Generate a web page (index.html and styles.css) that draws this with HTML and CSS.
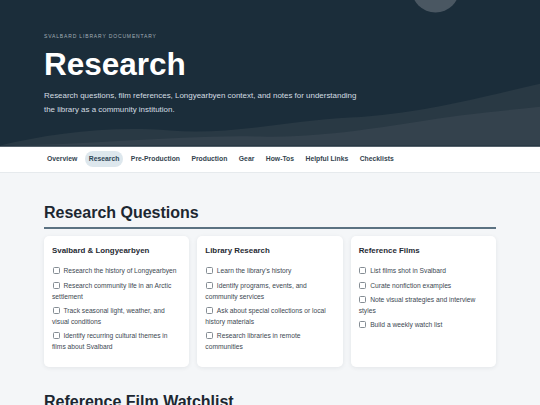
FILE: index.html
```html
<!DOCTYPE html>
<html lang="en">
<head>
<meta charset="utf-8">
<title>Research</title>
<link rel="stylesheet" href="styles.css">
</head>
<body>
<header class="hero">
  <svg class="hero-art" viewBox="0 0 540 146" preserveAspectRatio="none" aria-hidden="true">
    <circle cx="435.5" cy="-11.5" r="24" fill="#4a5762"/>
    <path d="M0,146 C50,134 110,126 170,131 C230,136 290,121 350,118 C420,114 470,100 540,84 L540,146 Z" fill="#293944"/>
    <path d="M0,146 C90,146 180,135 260,137 C330,139 400,124 460,116 C490,112 515,110 540,107 L540,146 Z" fill="#34424d"/>
  </svg>
  <div class="hero-inner">
    <p class="eyebrow">SVALBARD LIBRARY DOCUMENTARY</p>
    <h1 class="hero-title">Research</h1>
    <p class="hero-sub">Research questions, film references, Longyearbyen context, and notes for understanding the library as a community institution.</p>
  </div>
</header>
<nav class="nav">
  <a class="nav-item" href="#">Overview</a>
  <a class="nav-item active" href="#">Research</a>
  <a class="nav-item" href="#">Pre-Production</a>
  <a class="nav-item" href="#">Production</a>
  <a class="nav-item" href="#">Gear</a>
  <a class="nav-item" href="#">How-Tos</a>
  <a class="nav-item" href="#">Helpful Links</a>
  <a class="nav-item" href="#">Checklists</a>
</nav>
<main class="main">
  <section class="section">
    <h2 class="section-title">Research Questions</h2>
    <div class="cards">
      <div class="card">
        <h3 class="card-title">Svalbard &amp; Longyearbyen</h3>
        <ul class="checklist">
          <li><input type="checkbox" class="box">Research the history of Longyearbyen</li>
          <li><input type="checkbox" class="box">Research community life in an Arctic settlement</li>
          <li><input type="checkbox" class="box">Track seasonal light, weather, and visual conditions</li>
          <li><input type="checkbox" class="box">Identify recurring cultural themes in films about Svalbard</li>
        </ul>
      </div>
      <div class="card">
        <h3 class="card-title">Library Research</h3>
        <ul class="checklist">
          <li><input type="checkbox" class="box">Learn the library's history</li>
          <li><input type="checkbox" class="box">Identify programs, events, and community services</li>
          <li><input type="checkbox" class="box">Ask about special collections or local history materials</li>
          <li><input type="checkbox" class="box">Research libraries in remote communities</li>
        </ul>
      </div>
      <div class="card">
        <h3 class="card-title">Reference Films</h3>
        <ul class="checklist">
          <li><input type="checkbox" class="box">List films shot in Svalbard</li>
          <li><input type="checkbox" class="box">Curate nonfiction examples</li>
          <li><input type="checkbox" class="box">Note visual strategies and interview styles</li>
          <li><input type="checkbox" class="box">Build a weekly watch list</li>
        </ul>
      </div>
    </div>
  </section>
  <section class="section">
    <h2 class="section-title">Reference Film Watchlist</h2>
  </section>
</main>
</body>
</html>
```

FILE: styles.css
```css
* { box-sizing: border-box; }
html, body {
  margin: 0;
  padding: 0;
  background: #f4f6f8;
  font-family: "Liberation Sans", Arial, sans-serif;
}
.hero {
  position: relative;
  background: #1b2d3a;
  border-bottom: 1px solid #55616b;
  overflow: hidden;
}
.hero-art {
  position: absolute;
  left: 0;
  top: 0;
  width: 100%;
  height: 100%;
  display: block;
}
.hero-inner {
  position: relative;
  padding: 32.5px 44px 29px;
}
.eyebrow {
  margin: 0;
  font-size: 5px;
  line-height: 6px;
  letter-spacing: 0.17em;
  color: #a3aeb6;
}
.hero-title {
  margin: 8px 0 0;
  font-size: 31.5px;
  line-height: 34.5px;
  font-weight: 700;
  color: #ffffff;
}
.hero-sub {
  margin: 7.5px 0 0;
  max-width: 316px;
  font-size: 7.95px;
  line-height: 14px;
  color: #d5dde2;
}
.nav {
  display: flex;
  align-items: center;
  gap: 3.5px;
  height: 26px;
  padding: 0 43px;
  background: #ffffff;
  border-bottom: 1px solid #e6eaed;
}
.nav-item {
  display: block;
  padding: 0 4px;
  height: 15.5px;
  line-height: 15.5px;
  border-radius: 8px;
  font-size: 6.8px;
  font-weight: 700;
  color: #34444f;
  text-decoration: none;
}
.nav-item.active {
  background: #dde7ed;
  color: #2e4656;
}
.main {
  padding: 30px 44px 0;
}
.section {
  margin-bottom: 25px;
}
.section-title {
  margin: 0;
  padding-bottom: 5.5px;
  border-bottom: 2px solid #5b7282;
  font-size: 16px;
  line-height: 19px;
  font-weight: 700;
  color: #1c2731;
}
.cards {
  display: grid;
  grid-template-columns: repeat(3, 1fr);
  gap: 8px;
  margin-top: 7px;
}
.card {
  background: #ffffff;
  border-radius: 5px;
  padding: 10px 8px 11.5px;
  box-shadow: 0 1px 4px rgba(20, 35, 50, 0.08);
}
.card-title {
  margin: 0 0 9px;
  font-size: 7.9px;
  line-height: 10.4px;
  font-weight: 700;
  color: #1f2a33;
}
.checklist {
  list-style: none;
  margin: 0;
  padding: 0;
}
.checklist li {
  margin: 0 0 3px;
  font-size: 6.7px;
  line-height: 11.1px;
  color: #3d4852;
}
.box {
  -webkit-appearance: none;
  appearance: none;
  display: inline-block;
  width: 7px;
  height: 7px;
  margin: 0 4px 0 0.5px;
  border: 0.8px solid #858d94;
  border-radius: 1.5px;
  background: #ffffff;
  vertical-align: -1px;
}
```
